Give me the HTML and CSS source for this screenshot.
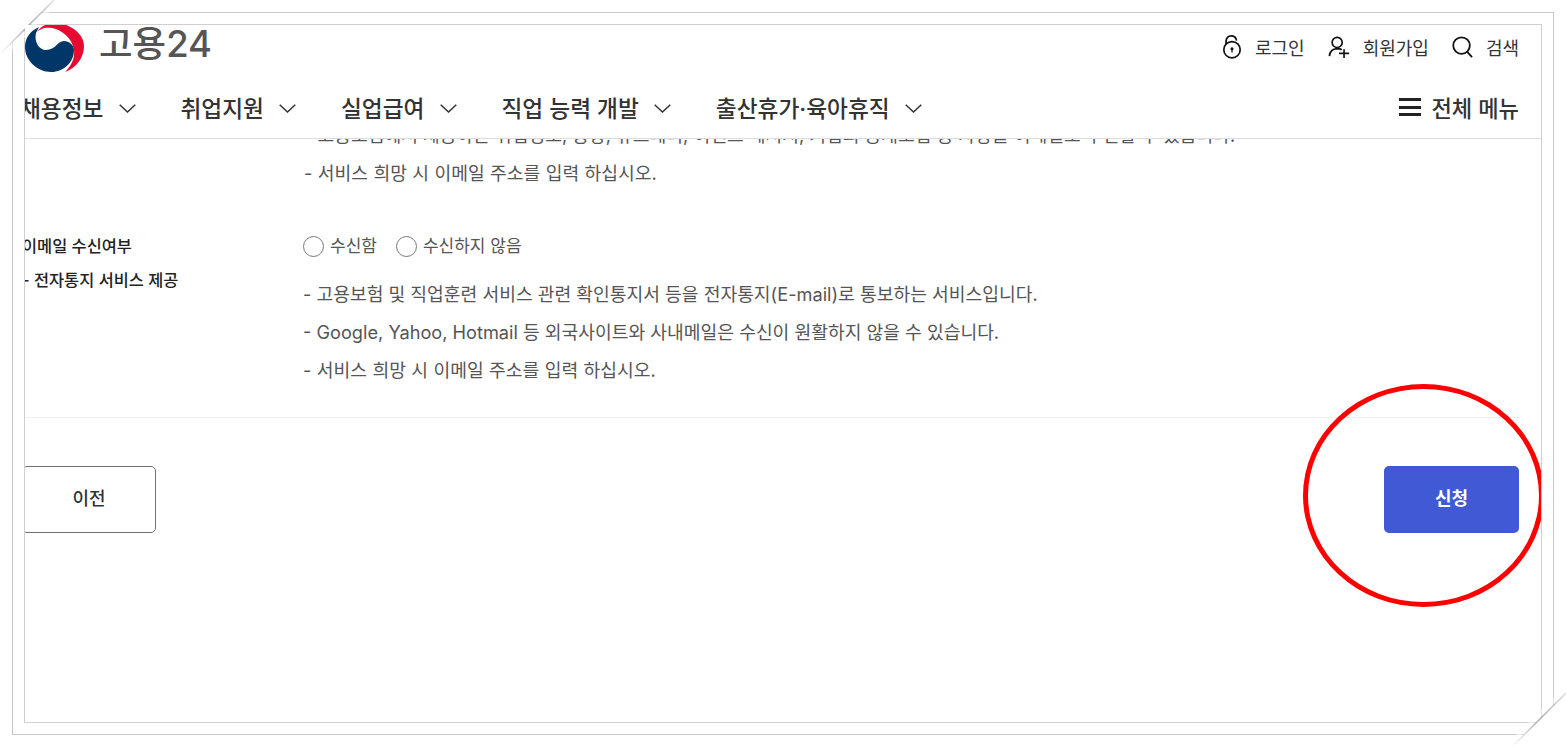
FILE: index.html
```html
<!DOCTYPE html>
<html lang="ko">
<head>
	<meta charset="UTF-8">
	<title>고용24 - 이메일 수신여부</title>
	<link rel="stylesheet" href="styles.css">
</head>
<body>
	<div class="frame-outer">
		<div class="frame-inner">
			<div class="page">
				<header class="site-header">
					<div class="topbar">
						<a class="logo">
							<svg class="logo-mark" viewBox="25 14 60 60" width="60" height="60">
								<path fill="#e60a32" d="M36 33C41 25 50 22 58 23C73 25 84 35 84 46C84 58 76 68 65 72C71 66 75 59 74 50C72 38 62 30 52 28C45 27 39 29 36 33Z"/>
								<path fill="#003668" d="M39 27C30 31 25 38 25 47C25 61 38 72 51 72C64 72 74 62 74 50C74 45 69 41 64 41C57 41 56 50 46 50C39 50 34 42 36 33C37 31 38 29 39 27Z"/>
							</svg>
							<span class="logo-text">고용24</span>
						</a>
						<nav class="util">
							<a class="util-item">
								<svg class="util-icon" viewBox="0 0 22 28" width="20" height="26">
									<circle cx="11" cy="17" r="9" fill="none" stroke="#111" stroke-width="1.900"/>
									<path d="M4.5 11V7.5C4.500 4 7 1.800 10 1.800C13 1.800 15.500 4 16 7" fill="none" stroke="#111" stroke-width="1.900"/>
									<circle cx="11" cy="16" r="1.700" fill="#111"/>
									<path d="M11 16V20" stroke="#111" stroke-width="1.400"/>
								</svg>
								<span>로그인</span>
							</a>
							<a class="util-item">
								<svg class="util-icon" viewBox="0 0 24 24" width="22" height="22">
									<circle cx="10" cy="7" r="5.500" fill="none" stroke="#111" stroke-width="1.800"/>
									<path d="M1.500 22C2 17 5 14 10 13.800C12 13.800 14 14.300 15 15" fill="none" stroke="#111" stroke-width="1.800"/>
									<path d="M12 19H23M17.500 14.500V24" stroke="#111" stroke-width="1.800"/>
								</svg>
								<span>회원가입</span>
							</a>
							<a class="util-item">
								<svg class="util-icon" viewBox="0 0 22 24" width="21" height="23">
									<circle cx="10" cy="10" r="8.700" fill="none" stroke="#111" stroke-width="1.900"/>
									<path d="M16 16.500L21 22" stroke="#111" stroke-width="1.900"/>
								</svg>
								<span>검색</span>
							</a>
						</nav>
					</div>
					<nav class="gnb">
						<ul class="gnb-list">
							<li class="gnb-item">채용정보<svg class="chev" viewBox="0 0 17 9" width="17" height="9"><path d="M.7.700L8.500 8L16.300.700"/></svg></li>
							<li class="gnb-item">취업지원<svg class="chev" viewBox="0 0 17 9" width="17" height="9"><path d="M.7.700L8.500 8L16.300.700"/></svg></li>
							<li class="gnb-item">실업급여<svg class="chev" viewBox="0 0 17 9" width="17" height="9"><path d="M.7.700L8.500 8L16.300.700"/></svg></li>
							<li class="gnb-item">직업 능력 개발<svg class="chev" viewBox="0 0 17 9" width="17" height="9"><path d="M.7.700L8.500 8L16.300.700"/></svg></li>
							<li class="gnb-item">출산휴가·육아휴직<svg class="chev" viewBox="0 0 17 9" width="17" height="9"><path d="M.7.700L8.500 8L16.300.700"/></svg></li>
						</ul>
						<a class="all-menu">
							<span class="burger"></span>
							전체 메뉴
						</a>
					</nav>
				</header>

				<main class="content">
					<div class="notes notes-cut">
						<p>- 고용보험에서 제공하는 취업정보, 동향, 뉴스레터, 이벤트 메시지, 기업의 공개모집 등 사항을 이메일로 수신할 수 있습니다.</p>
						<p class="note-last">- 서비스 희망 시 이메일 주소를 입력 하십시오.</p>
					</div>

					<section class="field">
						<div class="field-label">
							<div class="label-main">이메일 수신여부</div>
							<div class="label-sub">- 전자통지 서비스 제공</div>
						</div>
						<div class="field-body">
							<div class="radios">
								<label class="radio"><span class="radio-dot"></span>수신함</label>
								<label class="radio"><span class="radio-dot"></span>수신하지 않음</label>
							</div>
							<div class="notes">
								<p>- 고용보험 및 직업훈련 서비스 관련 확인통지서 등을 전자통지(E-mail)로 통보하는 서비스입니다.</p>
								<p>- Google, Yahoo, Hotmail 등 외국사이트와 사내메일은 수신이 원활하지 않을 수 있습니다.</p>
								<p class="note-last">- 서비스 희망 시 이메일 주소를 입력 하십시오.</p>
							</div>
						</div>
					</section>

					<div class="actions">
						<button class="btn btn-prev">이전</button>
						<button class="btn btn-apply">신청</button>
					</div>
				</main>

				<!-- red marker drawn over the screenshot -->
				<div class="marker"></div>
			</div>
		</div>
	</div>

	<!-- torn corners of the captured picture -->
	<svg class="fold fold-tl" viewBox="0 0 70 70" width="70" height="70">
		<defs>
			<linearGradient id="fold-a" x1="0" y1="1" x2="1" y2="0">
				<stop offset="0" stop-color="#fff"/>
				<stop offset=".5" stop-color="#aaa"/>
				<stop offset="1" stop-color="#ddd"/>
			</linearGradient>
		</defs>
		<path d="M0 0H54L0 54Z" fill="#fff"/>
		<path d="M54 0L0 54" stroke="url(#fold-a)" stroke-width="1.500"/>
		<path d="M56 0L0 56L0 62L62 0Z" fill="#fff" opacity=".55"/>
	</svg>
	<svg class="fold fold-br" viewBox="0 0 70 70" width="70" height="70">
		<defs>
			<linearGradient id="fold-b" x1="0" y1="1" x2="1" y2="0">
				<stop offset="0" stop-color="#fff"/>
				<stop offset=".5" stop-color="#aaa"/>
				<stop offset="1" stop-color="#ddd"/>
			</linearGradient>
		</defs>
		<path d="M70 70H16L70 16Z" fill="#fff"/>
		<path d="M16 70L70 16" stroke="url(#fold-b)" stroke-width="1.500"/>
		<path d="M14 70L70 14L70 8L8 70Z" fill="#fff" opacity=".55"/>
	</svg>
</body>
</html>
```

FILE: styles.css
```css
* {
	box-sizing: border-box;
}

html, body {
	margin: 0;
	padding: 0;
	background: #fff;
	overflow: hidden;
}

body {
	position: relative;
	height: 747px;
	padding: 12px 12px 0;
	font-family: Inter, "Noto Sans CJK KR", sans-serif;
	color: #555;
}

a {
	color: inherit;
	text-decoration: none;
}

/* frames */
.frame-outer {
	height: 723px;
	padding: 11px;
	border: 1px solid #c9c9c9;
}

.frame-inner {
	height: 699px;
	border: 1px solid #cfcfcf;
}

.page {
	position: relative;
	height: 697px;
	overflow: hidden;
}

/* header */
.site-header {
	position: relative;
	z-index: 2;
	height: 114px;
	padding-right: 22px;
	background: #fff;
	border-bottom: 1px solid #ddd;
}

.topbar {
	display: flex;
	justify-content: space-between;
	height: 57px;
}

.logo {
	display: flex;
	gap: 14px;
}

.logo-mark {
	flex: none;
	margin-top: -11px;
}

.logo-text {
	font-size: 36.500px;
	line-height: 38px;
	font-weight: 500;
	color: #555;
}

.util {
	display: flex;
	align-items: center;
	gap: 23px;
	height: 44px;
}

.util-item {
	display: flex;
	align-items: center;
	gap: 13px;
	font-size: 18px;
	color: #333;
}

.gnb {
	display: flex;
	justify-content: space-between;
	align-items: center;
	height: 50px;
	margin-left: -5px;
}

.gnb-list {
	display: flex;
	gap: 45px;
	margin: 0;
	padding: 0;
	list-style: none;
}

.gnb-item {
	display: flex;
	align-items: center;
	gap: 15px;
	font-size: 22.700px;
	font-weight: 500;
	color: #333;
}

.chev {
	margin-top: 2px;
}

.chev path {
	fill: none;
	stroke: #333;
	stroke-width: 1.500;
}

.all-menu {
	display: flex;
	align-items: center;
	gap: 10px;
	font-size: 22.200px;
	font-weight: 500;
	color: #333;
}

.burger {
	width: 22px;
	height: 18px;
	border-top: 3px solid #222;
	border-bottom: 3px solid #222;
	position: relative;
}

.burger::after {
	content: "";
	position: absolute;
	left: 0;
	right: 0;
	top: 4.500px;
	height: 3px;
	background: #222;
}

/* form */
.content {
	margin-top: -23px;
	padding-right: 22px;
}

.notes {
	padding-left: 279px;
	font-size: 18.200px;
	line-height: 38px;
}

.notes p {
	margin: 0;
	white-space: nowrap;
}

.notes .note-last {
	word-spacing: .300px;
}

.notes-cut {
	height: 116px;
}

.field {
	display: flex;
	margin-left: -3px;
}

.field-label {
	flex: none;
	width: 281px;
	font-size: 16.400px;
	font-weight: 500;
	color: #222;
}

.label-main {
	line-height: 28px;
}

.label-sub {
	margin-top: 6px;
	line-height: 28px;
}

.field-body {
	margin-left: -1px;
}

.field-body .notes {
	margin-top: 15px;
	padding-left: 1px;
}

.radios {
	display: flex;
	gap: 18px;
	font-size: 17px;
}

.radio {
	display: flex;
	align-items: center;
	gap: 6px;
	line-height: 28px;
}

.radio-dot {
	width: 21px;
	height: 21px;
	margin-left: 1px;
	border: 1px solid #777;
	border-radius: 50%;
}

.actions {
	display: flex;
	justify-content: space-between;
	margin-top: 28px;
	padding-top: 48px;
	border-top: 1px solid #eee;
}

.btn {
	height: 67px;
	padding: 0 0 5px;
	border-radius: 5px;
	font: 500 18px Inter, "Noto Sans CJK KR", sans-serif;
}

.btn-prev {
	width: 134px;
	margin-left: -3px;
	background: #fff;
	border: 1px solid #707070;
	color: #333;
}

.btn-apply {
	width: 135px;
	background: #4059d4;
	border: 0;
	color: #fff;
	font-weight: 700;
}

.marker {
	position: absolute;
	left: 1278px;
	top: 359px;
	width: 241px;
	height: 223px;
	border: 5px solid #f00;
	border-radius: 50%;
	z-index: 3;
}

/* corners */
.fold {
	position: absolute;
}

.fold-tl {
	left: 0;
	top: 0;
}

.fold-br {
	right: 0;
	bottom: 0;
}
```
